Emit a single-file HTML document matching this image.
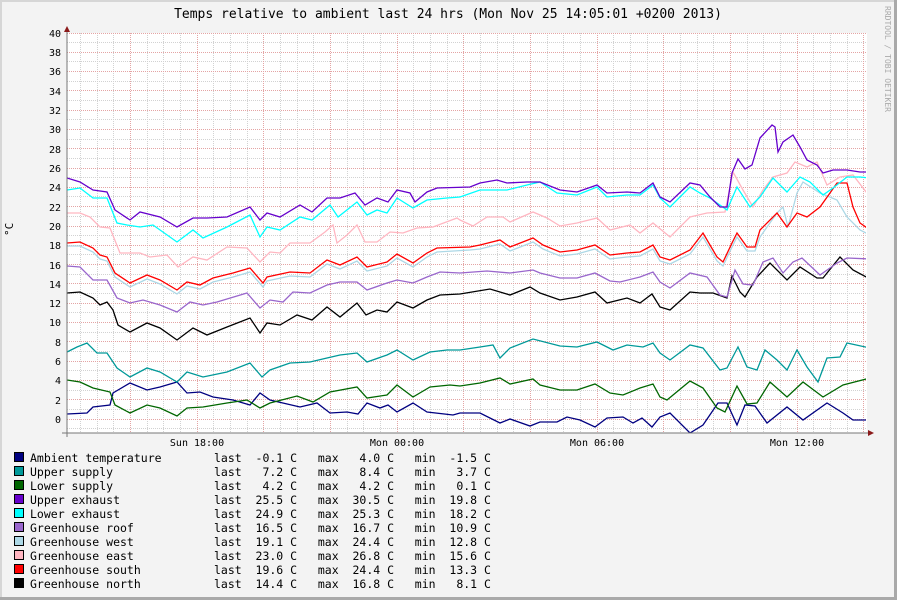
<!DOCTYPE html>
<html><head><meta charset="utf-8"><style>
html,body{margin:0;padding:0;background:#f3f3f3;}
svg{display:block;}
text{font-family:"DejaVu Sans Mono","Liberation Mono",monospace;white-space:pre;}
</style></head><body>
<svg width="897" height="600" xmlns="http://www.w3.org/2000/svg">
<defs>
<clipPath id="pc"><rect x="67" y="30" width="799" height="403"/></clipPath>
</defs>
<rect x="0" y="0" width="897" height="600" fill="#f3f3f3"/>
<rect x="0" y="0" width="897" height="2" fill="#d6d6d6"/>
<rect x="0" y="0" width="2" height="600" fill="#d6d6d6"/>
<rect x="894" y="0" width="3" height="600" fill="#a9a9a9"/>
<rect x="0" y="597" width="897" height="3" fill="#a9a9a9"/>
<rect x="67" y="33" width="800" height="400" fill="#fff"/>

<g fill="none" stroke="#d2d2d2" stroke-width="1" stroke-dasharray="1,1">
<path d="M80.5 33V433M97.5 33V433M113.5 33V433M147.5 33V433M163.5 33V433M180.5 33V433M213.5 33V433M230.5 33V433M247.5 33V433M280.5 33V433M297.5 33V433M313.5 33V433M347.5 33V433M363.5 33V433M380.5 33V433M413.5 33V433M430.5 33V433M447.5 33V433M480.5 33V433M497.5 33V433M513.5 33V433M547.5 33V433M563.5 33V433M580.5 33V433M613.5 33V433M630.5 33V433M647.5 33V433M680.5 33V433M697.5 33V433M713.5 33V433M747.5 33V433M763.5 33V433M780.5 33V433M813.5 33V433M830.5 33V433M847.5 33V433"/>
<path d="M67 428.5H867M67 409.5H867M67 390.5H867M67 370.5H867M67 351.5H867M67 332.5H867M67 312.5H867M67 293.5H867M67 274.5H867M67 254.5H867M67 235.5H867M67 216.5H867M67 196.5H867M67 177.5H867M67 158.5H867M67 139.5H867M67 119.5H867M67 100.5H867M67 81.5H867M67 61.5H867M67 42.5H867"/>
</g>
<g fill="none" stroke="#e4a4a4" stroke-width="1" stroke-dasharray="1,1">
<path d="M130.5 33V433M197.5 33V433M263.5 33V433M330.5 33V433M397.5 33V433M463.5 33V433M530.5 33V433M597.5 33V433M663.5 33V433M730.5 33V433M797.5 33V433M863.5 33V433"/>
<path d="M67 419.5H867M67 399.5H867M67 380.5H867M67 361.5H867M67 341.5H867M67 322.5H867M67 303.5H867M67 283.5H867M67 264.5H867M67 245.5H867M67 226.5H867M67 206.5H867M67 187.5H867M67 168.5H867M67 148.5H867M67 129.5H867M67 110.5H867M67 90.5H867M67 71.5H867M67 52.5H867M67 33.5H867"/>
</g>

<text x="448" y="18" font-size="13" text-anchor="middle" fill="#000">Temps relative to ambient last 24 hrs (Mon Nov 25 14:05:01 +0200 2013)</text>
<text transform="translate(885,6) rotate(90)" font-size="8" fill="#aaa">RRDTOOL / TOBI OETIKER</text>
<text transform="translate(13,236) rotate(-90)" font-size="11" fill="#000">°C</text>

<g font-size="10" fill="#000" text-anchor="end">
<text x="61" y="37">40</text><text x="61" y="56">38</text><text x="61" y="75">36</text><text x="61" y="95">34</text><text x="61" y="114">32</text><text x="61" y="133">30</text><text x="61" y="153">28</text><text x="61" y="172">26</text><text x="61" y="191">24</text><text x="61" y="211">22</text><text x="61" y="230">20</text><text x="61" y="249">18</text><text x="61" y="269">16</text><text x="61" y="288">14</text><text x="61" y="307">12</text><text x="61" y="326">10</text><text x="61" y="346">8</text><text x="61" y="365">6</text><text x="61" y="384">4</text><text x="61" y="404">2</text><text x="61" y="423">0</text>
</g>
<g font-size="10" fill="#000" text-anchor="middle">
<text x="197" y="446">Sun 18:00</text><text x="397" y="446">Mon 00:00</text><text x="597" y="446">Mon 06:00</text><text x="797" y="446">Mon 12:00</text>
</g>

<g fill="none" stroke-width="1.3" stroke-linejoin="miter" clip-path="url(#pc)">
<polyline stroke="#000080" points="67,414 87,413 93,407 110,405 113,393 130,383 147,390 160,387 177,382 187,393 200,392 213,397 233,400 250,405 260,393 270,400 300,407 317,403 330,413 347,412 358,414 367,403 380,408 388,405 397,412 413,403 427,412 453,415 460,413 480,413 500,423 510,419 530,426 540,422 557,422 567,417 580,420 595,427 607,418 623,417 633,423 642,418 652,427 660,417 670,413 690,433 703,425 718,403 727,403 737,425 745,405 755,406 767,423 787,407 803,420 827,403 843,413 853,420 870,420"/>
<polyline stroke="#009999" points="67,352 77,347 87,343 97,353 107,353 117,368 130,377 147,368 160,372 177,382 187,372 203,377 227,372 250,363 262,377 270,370 290,363 310,362 327,358 340,355 357,353 367,362 387,355 397,350 413,360 430,352 447,350 460,350 480,347 493,345 500,358 510,348 533,339 560,346 577,347 597,342 613,350 627,345 643,347 653,343 660,353 670,360 690,345 703,348 720,370 727,368 738,347 747,367 757,370 765,350 777,360 787,370 797,350 807,367 818,382 827,358 840,357 847,343 870,348"/>
<polyline stroke="#006600" points="67,380 80,382 93,388 110,392 115,405 130,413 147,405 160,408 177,416 187,408 203,407 227,403 247,400 260,408 270,403 297,396 313,402 330,392 357,387 367,398 387,395 397,385 413,397 430,387 450,385 460,386 480,383 500,378 510,384 533,379 540,385 560,390 577,390 595,384 610,393 623,395 640,388 653,384 660,397 667,400 690,381 703,388 717,408 725,412 737,386 747,404 757,403 770,382 787,397 803,382 823,397 843,385 870,378"/>
<polyline stroke="#000000" points="67,293 80,292 93,298 100,305 107,302 113,310 118,325 130,332 147,323 160,328 177,340 193,328 207,335 227,327 250,318 260,333 267,323 280,325 297,315 312,320 327,307 340,317 357,303 366,315 377,310 387,312 397,302 413,308 427,300 440,295 460,294 490,289 510,295 530,287 540,293 560,300 577,297 595,292 607,303 627,298 640,303 652,294 660,307 670,310 690,292 700,293 713,293 727,298 732,276 740,292 745,297 757,277 770,263 787,280 800,267 817,278 823,278 840,257 853,270 870,279"/>
<polyline stroke="#9966cc" points="67,266 80,267 93,280 107,280 117,298 130,303 143,300 160,305 177,312 190,302 203,305 217,302 247,293 260,308 270,300 283,302 293,292 310,293 327,285 340,282 357,282 367,290 387,283 397,280 413,283 427,277 440,272 460,273 487,271 510,273 533,270 540,273 560,278 577,278 595,273 610,281 620,282 640,277 653,272 660,282 670,288 690,273 707,277 720,295 727,297 735,270 743,284 753,285 763,262 773,258 783,273 793,262 802,258 820,275 837,263 847,258 870,259"/>
<polyline stroke="#add8e6" points="67,246 80,246 93,252 100,259 107,261 115,277 130,287 147,279 160,284 177,294 187,286 200,289 213,282 233,277 250,272 263,287 267,281 290,276 310,277 327,264 340,269 357,261 367,271 387,266 397,258 413,267 427,257 437,252 470,250 480,249 500,244 510,251 533,242 543,249 560,256 577,254 595,249 610,259 627,257 640,256 653,249 660,261 670,264 690,254 703,237 717,261 723,266 732,247 737,237 747,251 755,251 760,237 777,213 783,207 788,227 797,193 803,182 820,193 837,200 847,217 860,230 870,235"/>
<polyline stroke="#ff0000" points="67,243 80,242 93,248 100,255 107,257 115,273 130,283 147,275 160,280 177,290 187,282 200,285 213,278 233,273 250,268 263,283 267,277 290,272 310,273 327,260 340,265 357,257 367,267 387,262 397,254 413,263 427,253 437,248 470,247 480,245 500,240 510,247 533,238 543,245 560,252 577,250 595,245 610,255 627,253 640,252 653,245 660,257 670,260 690,250 703,233 717,257 723,262 732,243 737,233 747,247 755,247 760,230 777,213 787,227 797,213 807,217 820,207 830,193 837,183 847,183 853,207 860,223 870,230"/>
<polyline stroke="#ffb6c1" points="67,213 80,213 90,217 100,227 110,228 120,253 130,253 140,253 150,257 167,255 178,267 193,257 207,260 227,247 247,248 260,262 270,252 280,253 290,243 310,243 325,232 333,225 337,243 347,235 357,225 365,242 377,242 390,232 403,233 417,228 433,227 457,218 460,220 473,226 487,217 503,217 510,222 533,212 547,218 560,226 577,223 597,218 610,230 630,225 640,233 653,223 670,237 690,217 707,213 725,212 733,172 743,190 753,207 763,190 773,177 787,173 795,162 807,167 817,162 827,185 840,177 853,175 870,197"/>
<polyline stroke="#00ffff" points="67,190 80,188 93,198 107,198 117,223 127,225 140,227 153,225 177,242 193,230 203,238 227,227 250,215 260,237 267,227 280,230 300,217 312,220 330,205 338,217 357,202 367,215 377,210 387,213 397,198 413,208 427,200 447,198 460,197 480,190 507,190 527,185 540,182 557,193 577,195 597,187 607,197 627,195 640,195 653,185 660,198 670,207 690,187 700,193 710,198 727,210 737,187 750,207 760,197 773,178 787,192 800,177 810,182 823,195 833,188 847,177 860,177 870,178"/>
<polyline stroke="#6600cc" points="67,178 80,182 93,190 107,192 115,210 130,220 140,212 160,217 177,227 193,218 207,218 227,217 250,207 260,220 267,213 280,217 300,205 312,212 327,198 340,198 355,193 365,205 377,198 388,202 397,190 410,193 415,202 427,192 437,188 470,187 480,183 497,180 507,183 527,182 540,182 560,190 577,192 597,185 607,193 627,192 640,193 653,183 660,197 670,202 690,183 700,185 710,197 720,207 727,207 732,173 738,159 745,169 752,165 760,138 772,125 775,127 778,152 783,142 793,135 800,147 807,160 817,165 823,173 833,170 847,170 860,172 870,172"/>
</g>

<line x1="67" y1="28" x2="67" y2="437" stroke="#777" stroke-width="1"/>
<line x1="62" y1="433" x2="868" y2="433" stroke="#777" stroke-width="1"/>
<polygon points="64,32 70,32 67,26" fill="#8b1a1a"/>
<polygon points="868,430 868,436 874,433" fill="#8b1a1a"/>

<g font-size="11.5" fill="#000">
<rect x="14.5" y="452.5" width="9" height="9" fill="#000080" stroke="#000"/>
<rect x="14.5" y="466.5" width="9" height="9" fill="#009999" stroke="#000"/>
<rect x="14.5" y="480.5" width="9" height="9" fill="#006600" stroke="#000"/>
<rect x="14.5" y="494.5" width="9" height="9" fill="#6600cc" stroke="#000"/>
<rect x="14.5" y="508.5" width="9" height="9" fill="#00ffff" stroke="#000"/>
<rect x="14.5" y="522.5" width="9" height="9" fill="#9966cc" stroke="#000"/>
<rect x="14.5" y="536.5" width="9" height="9" fill="#add8e6" stroke="#000"/>
<rect x="14.5" y="550.5" width="9" height="9" fill="#ffb6c1" stroke="#000"/>
<rect x="14.5" y="564.5" width="9" height="9" fill="#ff0000" stroke="#000"/>
<rect x="14.5" y="578.5" width="9" height="9" fill="#000000" stroke="#000"/>
<text x="30" y="462">Ambient temperature</text><text x="214" y="462">last  -0.1 C   max   4.0 C   min  -1.5 C</text>
<text x="30" y="476">Upper supply</text><text x="214" y="476">last   7.2 C   max   8.4 C   min   3.7 C</text>
<text x="30" y="490">Lower supply</text><text x="214" y="490">last   4.2 C   max   4.2 C   min   0.1 C</text>
<text x="30" y="504">Upper exhaust</text><text x="214" y="504">last  25.5 C   max  30.5 C   min  19.8 C</text>
<text x="30" y="518">Lower exhaust</text><text x="214" y="518">last  24.9 C   max  25.3 C   min  18.2 C</text>
<text x="30" y="532">Greenhouse roof</text><text x="214" y="532">last  16.5 C   max  16.7 C   min  10.9 C</text>
<text x="30" y="546">Greenhouse west</text><text x="214" y="546">last  19.1 C   max  24.4 C   min  12.8 C</text>
<text x="30" y="560">Greenhouse east</text><text x="214" y="560">last  23.0 C   max  26.8 C   min  15.6 C</text>
<text x="30" y="574">Greenhouse south</text><text x="214" y="574">last  19.6 C   max  24.4 C   min  13.3 C</text>
<text x="30" y="588">Greenhouse north</text><text x="214" y="588">last  14.4 C   max  16.8 C   min   8.1 C</text>
</g>
</svg>
</body></html>
